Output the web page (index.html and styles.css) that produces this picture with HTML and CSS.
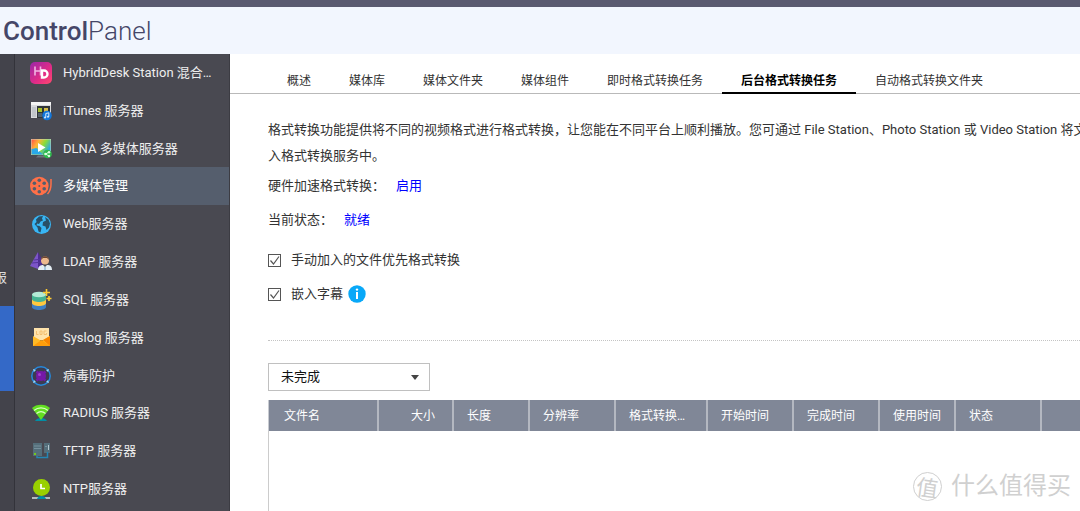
FILE: index.html
```html
<!DOCTYPE html>
<html lang="zh-CN">
<head>
<meta charset="utf-8">
<title>ControlPanel</title>
<link rel="stylesheet" href="styles.css">
</head>
<body>
<header class="topbar">
  <h1 class="title"><span class="title-strong">Control</span>Panel</h1>
</header>
<div class="layout">
  <aside class="rail">
    <div class="rail-item"><span>报</span></div>
    <div class="rail-item rail-active"></div>
  </aside>
  <nav class="sidebar">
    <a class="item" href="#">
      <svg class="icon" viewBox="0 0 22 22"><defs><linearGradient id="hd" x1="0" y1="0" x2="1" y2="1"><stop offset="0" stop-color="#9a27a8"/><stop offset=".6" stop-color="#e22c86"/><stop offset="1" stop-color="#ff4a6e"/></linearGradient></defs><rect width="22" height="22" rx="5" fill="url(#hd)"/><path d="M5 4.500v9M10.500 4.500v9M5 9h5.500" stroke="#f2b5e2" stroke-width="1.600" fill="none"/><path d="M12 8.500h2a3.500 3.500 0 0 1 0 7h-2z" stroke="#fff" stroke-width="2.400" fill="none"/></svg>
      <span class="label">HybridDesk Station 混合桌面</span></a>
    <a class="item" href="#">
      <svg class="icon" viewBox="0 0 22 22"><rect x="1" y="2" width="20" height="16" fill="#d9dadd"/><rect x="1" y="2" width="20" height="3" fill="#f4f4f4"/><rect x="2" y="7" width="4" height="10" fill="#c2c6cb"/><rect x="7" y="6" width="13" height="12" fill="#303438"/><rect x="8" y="8" width="4" height="4" fill="#a5c02b"/><rect x="14" y="8" width="4" height="4" fill="#d8bd4a"/><rect x="8" y="13" width="4" height="4" fill="#53606b"/><circle cx="17" cy="15.500" r="4.800" fill="#1377db"/><path d="M15.800 17.500v-4l3-.7v4" stroke="#d5ebff" fill="none"/><circle cx="15" cy="17.500" r="1" fill="#d5ebff"/><circle cx="18" cy="16.800" r="1" fill="#d5ebff"/></svg>
      <span class="label">iTunes 服务器</span></a>
    <a class="item" href="#">
      <svg class="icon" viewBox="0 0 22 22"><defs><linearGradient id="tv" x1="0" y1="0" x2="1" y2=".5"><stop offset="0" stop-color="#ff5348"/><stop offset=".35" stop-color="#ffb238"/><stop offset=".65" stop-color="#8bdc36"/><stop offset="1" stop-color="#2aa9e6"/></linearGradient></defs><rect x="1" y="1" width="20" height="16" fill="#c9d6b8"/><rect x="1.500" y="1.500" width="19" height="15" fill="url(#tv)"/><path d="M1.500 16.500V11l5-1 6 6.500z" fill="#28a8e9"/><path d="M8 5l7.500 4.500L8 14z" fill="#fff"/><path d="M6 19.500h9l-1-2H8z" fill="#6e7379"/><circle cx="17.500" cy="16" r="4.300" fill="#30b84d"/><circle cx="15.500" cy="16" r="1.300" fill="#d8ffdd"/><circle cx="19" cy="14.200" r="1.200" fill="#d8ffdd"/><circle cx="19" cy="18" r="1.200" fill="#d8ffdd"/><path d="M19 14.200L15.500 16l3.500 2" stroke="#d8ffdd" fill="none"/></svg>
      <span class="label">DLNA 多媒体服务器</span></a>
    <a class="item item-active" href="#" aria-current="page">
      <svg class="icon" viewBox="0 0 22 22"><circle cx="9.300" cy="11" r="9.300" fill="#ff7048"/><g fill="#555e6d"><circle cx="9.300" cy="5.300" r="1.800"/><circle cx="4.400" cy="8.200" r="1.800"/><circle cx="14.200" cy="8.200" r="1.800"/><circle cx="4.400" cy="13.800" r="1.800"/><circle cx="14.200" cy="13.800" r="1.800"/><circle cx="9.300" cy="16.700" r="1.800"/><circle cx="9.300" cy="11" r="1"/></g><path d="M21 4v5c0 4-.5 7-3.500 10" stroke="#ff7048" stroke-width="1.500" fill="none"/></svg>
      <span class="label">多媒体管理</span></a>
    <a class="item" href="#">
      <svg class="icon" viewBox="0 0 22 22"><circle cx="11.500" cy="11.500" r="9.500" fill="#38b6f5"/><path d="M9 3.500l4-.5-1 2.500 1 2-2.500 1L9 11l-2-.5-.5 2 3 .5 2 2-1 4.500-2-1-1-4-3-3.500 2-2-.5-2.500z" fill="#285068"/><path d="M15 4l3.500 2.500 1.500 4-1 4-2.500 2.500-1-3.500-3-1 .5-3.500 3-1.500z" fill="#285068"/></svg>
      <span class="label">Web服务器</span></a>
    <a class="item" href="#">
      <svg class="icon" viewBox="0 0 22 22"><path d="M8 1L0 15l8 3z" fill="#7c55c8"/><path d="M8 1v17l6-6z" fill="#4e2d91"/><path d="M4 9l8-1M2 12l11-1" stroke="#54359b"/><circle cx="15" cy="9.500" r="4" fill="#edb98e"/><path d="M11 9c0-5 8-5 8 0l-2-2h-4z" fill="#6a4631"/><path d="M8 19c0-4 3-5 5-5l2 2 2-2c3 0 5 1 5 5z" fill="#e4edf3"/><path d="M15 16v3" stroke="#6aa3cc"/></svg>
      <span class="label">LDAP 服务器</span></a>
    <a class="item" href="#">
      <svg class="icon" viewBox="0 0 22 22"><path d="M2 14v4c0 4 14 4 14 0v-4z" fill="#3e7fc2"/><path d="M2 10v4c0 4 14 4 14 0v-4z" fill="#ffc83d"/><path d="M2 5v5c0 4 14 4 14 0V5z" fill="#45b392"/><ellipse cx="9" cy="5.500" rx="7" ry="2.800" fill="#b3ead5"/><path d="M16.500 0v7M13 3.500h7M19 7v5M16.500 9.500h5" stroke="#ffca31" stroke-width="1.600"/></svg>
      <span class="label">SQL 服务器</span></a>
    <a class="item" href="#">
      <svg class="icon" viewBox="0 0 22 22"><path d="M4 1h15v12H4z" fill="#ffe3ab"/><path d="M6.500 4v3.500h2M10 4h2v3.500h-2zM16.500 4H14v3.500h2.500V6" stroke="#f4bf70" fill="none"/><path d="M3 9l8.500 5L20 9v10H3z" fill="#ffba27"/><path d="M3 19l8.500-6 8.500 6z" fill="#ff9d0a"/><path d="M20 9v10l-7-6z" fill="#f98500"/></svg>
      <span class="label">Syslog 服务器</span></a>
    <a class="item" href="#">
      <svg class="icon" viewBox="0 0 22 22"><circle cx="11" cy="11" r="9.200" fill="#3c3c50" stroke="#2689dc" stroke-width="1.500"/><circle cx="11" cy="11" r="5" fill="#7519a7"/><path d="M6.500 6.500l9 9M15.500 6.500l-9 9" stroke="#7519a7" stroke-width="2.500"/><circle cx="9.500" cy="9.500" r="1.500" fill="#a23fd0"/><path d="M3 4l3 1-2 2zM19 4l-3 1 2 2zM3 18l3-1-2-2zM19 18l-3-1 2-2z" fill="#9cd8fa"/></svg>
      <span class="label">病毒防护</span></a>
    <a class="item" href="#">
      <svg class="icon" viewBox="0 0 22 22"><path d="M5 19c2-4 10-4 12 0z" fill="#008fa5"/><path d="M2 6c4-4.500 14-4.500 18 0l-9 12z" fill="#62df20"/><path d="M4 8.500c4-3.500 10-3.500 14 0M6.500 11.500c3-2.500 6-2.500 9 0" stroke="#d9ffc5" stroke-width="1.200" fill="none"/></svg>
      <span class="label">RADIUS 服务器</span></a>
    <a class="item" href="#">
      <svg class="icon" viewBox="0 0 22 22"><rect x="3" y="3" width="9" height="13" fill="#546e7a"/><rect x="14" y="3" width="6" height="10" fill="#546e7a"/><path d="M4 6h7M4 8.500h7M15 6.500h2" stroke="#76909c"/><path d="M18.500 5v5" stroke="#b4c6ce"/><rect x="4" y="13" width="2" height="2" fill="#76c91c"/><path d="M7 16v1.500h10.500V12" stroke="#2486b4" stroke-width="1.500" fill="none"/></svg>
      <span class="label">TFTP 服务器</span></a>
    <a class="item" href="#">
      <svg class="icon" viewBox="0 0 22 22"><path d="M2 20h18" stroke="#b6babd" stroke-width="2"/><path d="M7 21c1-4 8-4 9 0z" fill="#008fa5"/><circle cx="11.500" cy="9.500" r="8.500" fill="#99d000"/><path d="M11 6v4.500h4" stroke="#fff" stroke-width="1.700" fill="none"/></svg>
      <span class="label">NTP服务器</span></a>
  </nav>
  <main class="main">
    <nav class="tabs">
      <a class="tab" href="#">概述</a>
      <a class="tab" href="#">媒体库</a>
      <a class="tab" href="#">媒体文件夹</a>
      <a class="tab" href="#">媒体组件</a>
      <a class="tab" href="#">即时格式转换任务</a>
      <a class="tab tab-active" href="#" aria-current="page">后台格式转换任务</a>
      <a class="tab" href="#">自动格式转换文件夹</a>
    </nav>
    <div class="content">
      <p class="intro">格式转换功能提供将不同的视频格式进行格式转换，让您能在不同平台上顺利播放。您可通过 File Station、Photo Station 或 Video Station 将文<br>入格式转换服务中。</p>
      <p class="status">硬件加速格式转换：<a href="#">启用</a></p>
      <p class="status">当前状态：<a href="#">就绪</a></p>
      <div class="options">
        <label class="option"><input class="check" type="checkbox" checked>手动加入的文件优先格式转换</label>
        <div class="option-row">
          <label class="option"><input class="check" type="checkbox" checked>嵌入字幕</label>
          <svg class="info" viewBox="0 0 18 18" role="img" aria-label="信息"><circle cx="9" cy="9" r="8.700" fill="#08a8f8"/><circle cx="9" cy="4.600" r="1.200" fill="#fff"/><path d="M9 7v7" stroke="#fff" stroke-width="2"/></svg>
        </div>
      </div>
      <hr class="divider">
      <select class="filter" aria-label="任务状态"><option>未完成</option></select>
      <table class="tasks">
        <colgroup><col class="c-name"><col class="c-size"><col class="c-small"><col class="c-time"><col class="c-format"><col class="c-time"><col class="c-time"><col class="c-small"><col class="c-time"><col></colgroup>
        <thead><tr><th>文件名</th><th class="right">大小</th><th>长度</th><th>分辨率</th><th>格式转换状态</th><th>开始时间</th><th>完成时间</th><th>使用时间</th><th>状态</th><th></th></tr></thead>
      </table>
      <div class="rows"></div>
    </div>
  </main>
</div>
<div class="watermark"><span class="seal"><span class="seal-char">值</span></span>什么值得买</div>
</body>
</html>
```
FILE: styles.css
```css
* { box-sizing: border-box; }

body {
  margin: 0;
  height: 100vh;
  display: flex;
  flex-direction: column;
  overflow: hidden;
  background: #fff;
  color: #333;
  font: 13px/26px Roboto, "Noto Sans CJK SC", sans-serif;
}

a { text-decoration: none; }
p { margin: 0; }

.topbar {
  flex: none;
  border-top: 7px solid #5a5a70;
  background: #f2f6fe;
  padding: 8px 3px 7px;
}

.title {
  margin: 0;
  font-size: 26px;
  line-height: 32px;
  font-weight: 300;
  color: #454668;
}
.title-strong { font-weight: 500; }

.layout { flex: 1; display: flex; min-height: 0; }

.rail {
  flex: none;
  width: 15px;
  border-right: 1px solid #33333a;
  background: #43434b;
  color: #ddd;
  display: grid;
  grid-template-rows: 168px 85px;
  align-content: end;
  padding-bottom: 120px;
}
.rail-item {
  display: flex;
  justify-content: flex-end;
  align-items: flex-end;
  padding: 0 7px 15px 0;
  overflow: hidden;
}
.rail-active { background: #3469c7; }

.sidebar {
  flex: none;
  width: 215px;
  display: flex;
  flex-direction: column;
  padding-bottom: 3px;
  background: #494951;
  border-right: 1px solid #3c3c43;
}
.item {
  flex: 1;
  display: flex;
  align-items: center;
  gap: 11px;
  padding: 0 15px;
  color: #eee;
}
.item-active { background: #555e6d; color: #fff; }
.icon { flex: none; width: 22px; height: 22px; }
.label { overflow: hidden; text-overflow: ellipsis; white-space: nowrap; }

.main { flex: 1; min-width: 0; display: flex; flex-direction: column; }

.tabs {
  display: flex;
  padding: 17px 0 0 38px;
  font-size: 12px;
  white-space: nowrap;
  box-shadow: inset 0 -1px #b9b9b9;
}
.tab {
  padding: 0 19px;
  line-height: 21px;
  color: #333;
}
.tab-active { color: #000; font-weight: 700; border-bottom: 2px solid #000; }

.content {
  flex: 1;
  display: flex;
  flex-direction: column;
  align-items: stretch;
  padding: 23px 0 0 38px;
  overflow: hidden;
}
.intro { white-space: nowrap; margin-bottom: 4px; }
.status { display: flex; gap: 11px; margin-bottom: 8px; }
.status a { color: #00f; }

.options { display: flex; flex-direction: column; gap: 8px; padding-top: 6px; }
.option { display: flex; align-items: center; gap: 10px; }
.option-row { display: flex; align-items: center; gap: 5px; }
.check {
  appearance: none;
  width: 13px;
  height: 13px;
  margin: 0;
  border: 1px solid #555;
  background: #fff;
}
.check:checked {
  background-image: url("data:image/svg+xml,%3Csvg xmlns='http://www.w3.org/2000/svg' viewBox='0 0 11 11'%3E%3Cpath d='M1.500 5.500l3 3.500L10 1.500' fill='none' stroke='%23555' stroke-width='1.200'/%3E%3C/svg%3E");
}
.info { width: 18px; height: 18px; }

.divider {
  width: 100%;
  margin: 33px 0 22px;
  border: 0;
  border-top: 1px dotted #c4c4c4;
}

.filter {
  appearance: none;
  flex: none;
  align-self: flex-start;
  width: 162px;
  height: 28px;
  padding: 0 12px;
  border: 1px solid #c0c0c0;
  border-radius: 0;
  color: #111;
  font: inherit;
  background: #fff url("data:image/svg+xml,%3Csvg xmlns='http://www.w3.org/2000/svg' viewBox='0 0 8 5'%3E%3Cpath d='M0 0h8L4 5z' fill='%23444'/%3E%3C/svg%3E") no-repeat right 10px center / 8px 5px;
}

.tasks {
  flex: none;
  width: 100%;
  margin-top: 9px;
  border-collapse: separate;
  border-spacing: 0;
  table-layout: fixed;
  background: #808797;
  border-left: 1px solid #c8cbd1;
  color: #fff;
  font-size: 12px;
}
.tasks th {
  height: 31px;
  padding: 1px 12px 0 13px;
  border-right: 2px solid #b4b8c1;
  font-weight: 400;
  line-height: 20px;
  text-align: left;
  white-space: nowrap;
  overflow: hidden;
  text-overflow: ellipsis;
}
.tasks th:first-child { padding-left: 15px; }
.tasks th:last-child { border-right: 0; }
.tasks .right { text-align: right; padding-right: 17px; }
.c-name { width: 110px; }
.c-size { width: 75px; }
.c-small { width: 76px; }
.c-time { width: 86px; }
.c-format { width: 92px; }
.rows { flex: 1; border-left: 1px solid #ccc; }

.watermark {
  position: absolute;
  right: 9px;
  bottom: 9px;
  display: flex;
  align-items: center;
  gap: 9px;
  color: #d0d0d0;
  font-size: 24px;
  line-height: 32px;
}
.seal {
  width: 29px;
  height: 29px;
  display: grid;
  place-items: center;
  border: 1px solid #d0d0d0;
  border-radius: 50%;
  font-size: 22px;
}
.seal-char { rotate: 8deg; }
```
